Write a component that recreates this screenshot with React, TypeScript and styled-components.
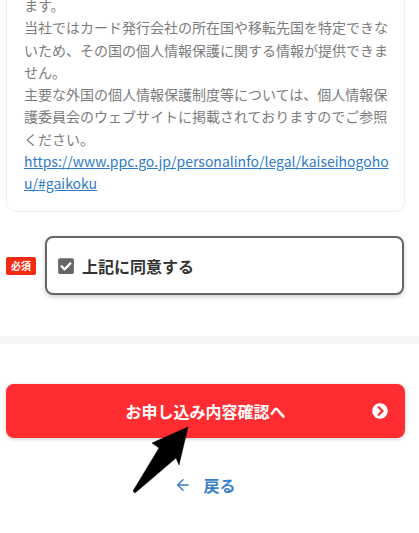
import styled, { createGlobalStyle } from 'styled-components';
import { FaCheckSquare, FaChevronCircleRight } from 'react-icons/fa';
import { ArrowLeft } from 'lucide-react';

const GlobalStyle = createGlobalStyle`
    html, body {
        margin: 0;
        background: #fff;
        font-family: "Noto Sans CJK JP", "Noto Sans", sans-serif;
    }
`;

const Page = styled.div`
    position: relative;
    width: 419px;
    height: 533px;
    overflow: hidden;
`;

const NoticeCard = styled.div`
    box-sizing: border-box;
    margin: -30px 14px 0 6px;
    padding: 23px 14px 16px 17px;
    border: 1px solid #eceff1;
    border-radius: 10px;
    font-size: 14px;
    line-height: 22.3px;
    color: #7c7c7c;
    height: 242px;
`;

const NoticeLine = styled.p`
    margin: 0;
`;

const NoticeLink = styled.a`
    color: #2f7bc8;
    text-decoration: underline;
    word-break: break-all;
`;

const AgreeRow = styled.div`
    display: flex;
    align-items: center;
    gap: 9px;
    margin: 24px 15px 0 6px;
`;

const RequiredBadge = styled.span`
    flex: none;
    width: 30px;
    height: 18px;
    border-radius: 2px;
    background: #f32b12;
    color: #fff;
    font-size: 10px;
    font-weight: 700;
    line-height: 18px;
    text-align: center;
`;

const AgreeBox = styled.label`
    flex: 1;
    box-sizing: border-box;
    height: 59px;
    display: flex;
    align-items: center;
    gap: 7px;
    padding-left: 10px;
    border: 2px solid #666;
    border-radius: 8px;
    background: #fff;
    box-shadow: 0 2px 4px rgba(0, 0, 0, 0.2);
    font-size: 16px;
    font-weight: 700;
    color: #333;
    svg {
        color: #666;
        font-size: 18px;
    }
`;

const Divider = styled.div`
    height: 8px;
    margin-top: 41px;
    background: #f6f6f6;
`;

const SubmitButton = styled.button`
    box-sizing: border-box;
    display: flex;
    align-items: center;
    justify-content: center;
    position: relative;
    width: 399px;
    height: 54px;
    margin: 40px 0 0 6px;
    border: 0;
    border-radius: 8px;
    background: #ff2d32;
    box-shadow: 0 1px 4px rgba(0, 0, 0, 0.2);
    color: #fff;
    font-family: inherit;
    font-size: 16px;
    font-weight: 700;
    svg {
        position: absolute;
        right: 17px;
        top: 19px;
        font-size: 16px;
    }
`;

const BackLink = styled.a`
    display: flex;
    align-items: center;
    justify-content: center;
    gap: 11px;
    margin: 35px 0 0 -9px;
    height: 24px;
    color: #3a80c8;
    font-size: 16px;
    font-weight: 700;
    text-decoration: none;
`;

const PointerArrow = styled.svg`
    position: absolute;
    left: 0;
    top: 0;
    pointer-events: none;
`;

export default function App() {
    return (
        <Page>
            <GlobalStyle />
            <NoticeCard>
                <NoticeLine>ます。</NoticeLine>
                <NoticeLine>当社ではカード発行会社の所在国や移転先国を特定できないため、その国の個人情報保護に関する情報が提供できません。</NoticeLine>
                <NoticeLine>主要な外国の個人情報保護制度等については、個人情報保護委員会のウェブサイトに掲載されておりますのでご参照ください。</NoticeLine>
                <NoticeLink href="#">https://www.ppc.go.jp/personalinfo/legal/kaiseihogohou/#gaikoku</NoticeLink>
            </NoticeCard>
            <AgreeRow>
                <RequiredBadge>必須</RequiredBadge>
                <AgreeBox>
                    <FaCheckSquare />
                    上記に同意する
                </AgreeBox>
            </AgreeRow>
            <Divider />
            <SubmitButton>
                お申し込み内容確認へ
                <FaChevronCircleRight />
            </SubmitButton>
            <BackLink href="#">
                <ArrowLeft size={18} strokeWidth={2} />
                戻る
            </BackLink>
            <PointerArrow width="419" height="533" viewBox="0 0 419 533">
                <path d="M188 427 L152 443 L159 448 L133 491 L135 493 L176 458 L179 465 Z" fill="#000" stroke="#000" strokeWidth="0.5" strokeLinejoin="round" />
            </PointerArrow>
        </Page>
    );
}
